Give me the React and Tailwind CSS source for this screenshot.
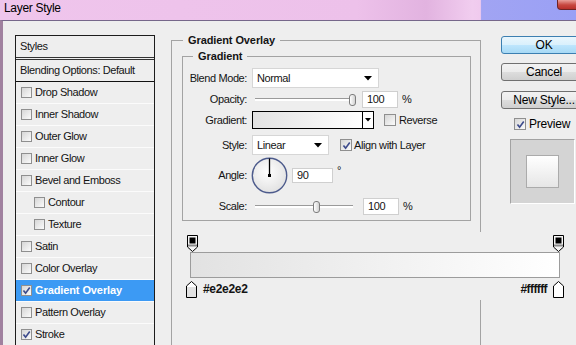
import React from 'react';

// Photoshop "Layer Style" dialog, Gradient Overlay page

const styleItems = [
  { name: 'Drop Shadow' },
  { name: 'Inner Shadow' },
  { name: 'Outer Glow' },
  { name: 'Inner Glow' },
  { name: 'Bevel and Emboss' },
  { name: 'Contour', sub: true },
  { name: 'Texture', sub: true },
  { name: 'Satin' },
  { name: 'Color Overlay' },
  { name: 'Gradient Overlay', checked: true, active: true },
  { name: 'Pattern Overlay' },
  { name: 'Stroke', checked: true },
];

const Check = ({ checked, small }) => (
  <span
    className={
      (small ? 'w-[11px] h-[11px] ' : 'w-[12px] h-[12px] ') +
      'shrink-0 border border-[#8f8f8f] bg-[linear-gradient(135deg,#d6d6d6,#fbfbfb)] flex items-center justify-center'
    }
  >
    {checked && (
      <svg viewBox="0 0 10 10" className="w-[9px] h-[9px]">
        <path d="M1.6 5 L4 7.9 L8.6 1.6" fill="none" stroke="#3d4b8c" strokeWidth="1.8" />
      </svg>
    )}
  </span>
);

const Arrow = () => (
  <svg viewBox="0 0 8 5" className="w-[8px] h-[5px]">
    <path d="M0 0 H8 L4 4.5 Z" fill="#000" />
  </svg>
);

const Slider = ({ left, right }) => (
  <div className="flex items-center h-full">
    <div className="h-[3px] border-t border-[#9a9a9a] bg-white" style={{ width: left }} />
    <div className="w-[7px] h-[12px] rounded-[3px] border border-[#7d7d7d] bg-[linear-gradient(90deg,#ffffff,#d2d2d2)]" />
    <div className="h-[3px] border-t border-[#9a9a9a] bg-white" style={{ width: right }} />
  </div>
);

const NumBox = ({ value, w }) => (
  <div className={w + ' h-full bg-white border border-[#cfcfcf] flex items-center pl-[4px]'}>{value}</div>
);

const Label = ({ children }) => <div className="w-[64px] text-right shrink-0">{children}</div>;

const TopStop = () => (
  <svg viewBox="0 0 11 17" className="w-[11px] h-[17px]">
    <path d="M0.5 0.5 H10.5 V12 L5.5 16.5 L0.5 12 Z" fill="#f6f6f6" stroke="#000" />
    <rect x="2.5" y="2.5" width="6" height="6" fill="#000" />
    <rect x="1" y="9.5" width="9" height="2" fill="#8c8c8c" />
  </svg>
);

const BottomStop = ({ color }) => (
  <svg viewBox="0 0 11 17" className="w-[11px] h-[17px]">
    <path d="M5.5 0.5 L10.5 5 V16.5 H0.5 V5 Z" fill="#fff" stroke="#000" />
    <rect x="1" y="6" width="9" height="10" fill={color} />
  </svg>
);

export default function App() {
  return (
    <div className="w-[576px] h-[345px] overflow-hidden flex flex-col bg-[#eeeeee] text-[11px] text-[#141414] tracking-[-0.4px] font-['Liberation_Sans',Arial,sans-serif]">
      {/* title bar */}
      <div className="h-[20px] shrink-0 flex items-start bg-[linear-gradient(90deg,#efc5ec_0%,#edc1ea_62%,#e2b3e0_74%,#f1cdef_82%,#f0caee_83.4%,#a1a4f3_83.6%,#9aa0f5_100%)]">
        <span className="pl-[4px] pt-[1px] text-[12px] leading-[14px] tracking-[-0.3px] text-black">Layer Style</span>
        <div className="ml-auto mr-[-12px] w-[31px] h-[10px] rounded-bl-[4px] border border-t-0 border-[#6e2424] bg-[linear-gradient(180deg,#e9a09a,#c7473f_55%,#b8302a)]" />
      </div>

      {/* body */}
      <div className="flex-1 min-h-0 overflow-hidden flex items-start border-t border-[#76678a] border-l-[3px] border-l-[#a0819f] pl-[12px] pt-[14px]">
        {/* styles list */}
        <div className="w-[140px] h-[330px] shrink-0 border-x border-t border-[#1c1c1c] flex flex-col">
          <div className="h-[24px] shrink-0 border-b-[3px] border-double border-[#333] flex items-center pl-[4px]">Styles</div>
          <div className="h-[22px] shrink-0 border-b border-[#111] flex items-center pl-[4px]">Blending Options: Default</div>
          {styleItems.map((item) => (
            <div
              key={item.name}
              className={
                'h-[22px] shrink-0 border-b border-[#fbfbfb] flex items-center gap-[3px] ' +
                (item.sub ? 'pl-[18px] ' : 'pl-[5px] ') +
                (item.active ? 'bg-[#3c9af4] text-white font-bold tracking-[-0.1px]' : '')
              }
            >
              <Check checked={item.checked} small />
              <span>{item.name}</span>
            </div>
          ))}
        </div>

        {/* gradient overlay group */}
        <fieldset className="w-[310px] min-w-0 h-[330px] shrink-0 ml-[16px] mt-[-1px] border border-[#a3a3a3] flex flex-col">
          <legend className="ml-[11px] px-[5px] font-bold leading-[12px] tracking-[-0.1px]">Gradient Overlay</legend>

          <fieldset className="min-w-0 ml-[10px] mr-[9px] mt-[4px] border border-[#a3a3a3] pb-[5px]">
            <legend className="ml-[10px] px-[5px] font-bold leading-[12px] tracking-[-0.1px]">Gradient</legend>

            <div className="mt-[6px] h-[20px] flex items-center">
              <Label>Blend Mode:</Label>
              <div className="ml-[5px] w-[127px] h-full bg-white border border-[#d6d6d6] flex items-center justify-between pl-[4px] pr-[6px]">
                <span>Normal</span>
                <Arrow />
              </div>
            </div>

            <div className="mt-[3px] h-[17px] flex items-center">
              <Label>Opacity:</Label>
              <div className="ml-[8px] w-[101px] h-full">
                <Slider left={94} right={0} />
              </div>
              <div className="ml-[6px] h-full">
                <NumBox value="100" w="w-[36px]" />
              </div>
              <span className="ml-[4px]">%</span>
            </div>

            <div className="mt-[3px] h-[18px] flex items-center">
              <Label>Gradient:</Label>
              <div className="ml-[5px] w-[122px] h-full border border-black flex">
                <div className="flex-1 bg-[linear-gradient(90deg,#e2e2e2,#ffffff)]" />
                <div className="w-[11px] border-l border-black bg-white flex items-center justify-center">
                  <svg viewBox="0 0 6 4" className="w-[6px] h-[4px]">
                    <path d="M0 0 H6 L3 3.5 Z" fill="#000" />
                  </svg>
                </div>
              </div>
              <span className="ml-[10px]">
                <Check />
              </span>
              <span className="ml-[3px]">Reverse</span>
            </div>

            <div className="mt-[6px] h-[20px] flex items-center">
              <Label>Style:</Label>
              <div className="ml-[5px] w-[77px] h-full bg-white border border-[#d6d6d6] flex items-center justify-between pl-[4px] pr-[6px]">
                <span>Linear</span>
                <Arrow />
              </div>
              <span className="ml-[11px]">
                <Check checked />
              </span>
              <span className="ml-[2px]">Align with Layer</span>
            </div>

            <div className="mt-[2px] h-[36px] flex items-center">
              <Label>Angle:</Label>
              <svg viewBox="0 0 37 37" className="ml-[4px] w-[37px] h-[37px]">
                <defs>
                  <radialGradient id="dial" cx="45%" cy="40%" r="60%">
                    <stop offset="0%" stopColor="#ffffff" />
                    <stop offset="100%" stopColor="#e2e2e2" />
                  </radialGradient>
                </defs>
                <circle cx="18.5" cy="18.5" r="17.2" fill="url(#dial)" stroke="#4d5b8c" strokeWidth="1.4" />
                <line x1="18.5" y1="18.5" x2="18.5" y2="1.5" stroke="#000" strokeWidth="1.3" />
                <rect x="17" y="17" width="3" height="3" fill="#000" />
              </svg>
              <div className="ml-[4px] h-[15px]">
                <NumBox value="90" w="w-[41px]" />
              </div>
              <span className="ml-[4px] self-start mt-[7px] leading-[12px]">°</span>
            </div>

            <div className="mt-[5px] h-[17px] flex items-center">
              <Label>Scale:</Label>
              <div className="ml-[8px] w-[98px] h-full">
                <Slider left={58} right={33} />
              </div>
              <div className="ml-[10px] h-full">
                <NumBox value="100" w="w-[36px]" />
              </div>
              <span className="ml-[4px]">%</span>
            </div>
          </fieldset>

          {/* gradient editor strip */}
          <div className="mt-[11px] ml-[13px] w-[391px] h-[68px] shrink-0 bg-[#eeeeee] pl-[5px] pt-[3px]">
            <div className="ml-[-3px] w-[377px] flex justify-between">
              <TopStop />
              <TopStop />
            </div>
            <div className="w-[370px] h-[26px] border border-[#9c9c9c] bg-[linear-gradient(90deg,#e2e2e2,#ffffff)]" />
            <div className="mt-[2px] ml-[-4px] w-[378px] flex items-center justify-between font-bold text-[12px]">
              <div className="flex items-center gap-[6px]">
                <BottomStop color="#e2e2e2" />
                <span className="tracking-[-0.3px]">#e2e2e2</span>
              </div>
              <div className="flex items-center gap-[6px]">
                <span className="tracking-[-0.6px]">#ffffff</span>
                <BottomStop color="#ffffff" />
              </div>
            </div>
          </div>
        </fieldset>

        {/* buttons & preview */}
        <div className="w-[86px] shrink-0 ml-[20px] mt-[1px] flex flex-col text-[12px] tracking-[-0.2px] text-black">
          <div className="h-[18px] rounded-[3px] border border-[#3c7fb1] bg-[linear-gradient(180deg,#eaf6fd_0%,#d9f0fc_50%,#bee6fd_51%,#a7d9f5_100%)] flex items-center justify-center leading-[14px]">
            OK
          </div>
          <div className="mt-[9px] h-[18px] rounded-[3px] border border-[#707070] bg-[linear-gradient(180deg,#f2f2f2_0%,#ebebeb_50%,#dddddd_51%,#cfcfcf_100%)] flex items-center justify-center leading-[14px]">
            Cancel
          </div>
          <div className="mt-[10px] h-[18px] rounded-[3px] border border-[#707070] bg-[linear-gradient(180deg,#f2f2f2_0%,#ebebeb_50%,#dddddd_51%,#cfcfcf_100%)] flex items-center justify-center leading-[14px]">
            New Style...
          </div>
          <div className="mt-[9px] ml-[13px] h-[12px] flex items-center gap-[3px]">
            <Check checked />
            <span className="leading-[14px]">Preview</span>
          </div>
          <div className="mt-[9px] ml-[9px] w-[65px] h-[65px] border-t border-l border-[#a2a2a2] border-b border-r border-b-white border-r-white bg-[#d4d4d4] flex items-center justify-center">
            <div className="w-[33px] h-[33px] border border-[#ababab] bg-[linear-gradient(180deg,#ffffff,#e6e6e6)]" />
          </div>
        </div>
      </div>
    </div>
  );
}
